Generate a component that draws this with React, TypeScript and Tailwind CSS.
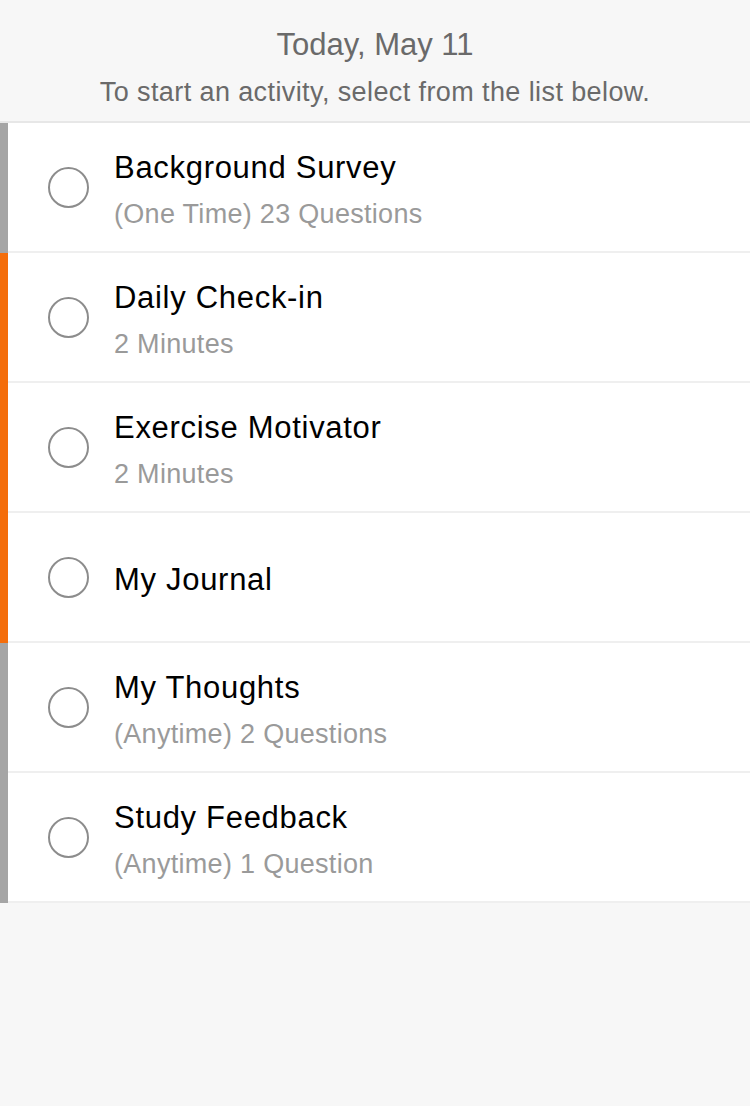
const activities = [
    { title: 'Background Survey', sub: '(One Time) 23 Questions', bar: 'bg-[#a5a5a5]' },
    { title: 'Daily Check-in', sub: '2 Minutes', bar: 'bg-[#f46d0a]' },
    { title: 'Exercise Motivator', sub: '2 Minutes', bar: 'bg-[#f46d0a]' },
    { title: 'My Journal', sub: null, bar: 'bg-[#f46d0a]' },
    { title: 'My Thoughts', sub: '(Anytime) 2 Questions', bar: 'bg-[#a5a5a5]' },
    { title: 'Study Feedback', sub: '(Anytime) 1 Question', bar: 'bg-[#a5a5a5]' },
];

export default function App() {
    return (
        <div className="min-h-[1106px] w-[750px] bg-[#f7f7f7] font-['Liberation_Sans',Arial,sans-serif]">
            <header className="h-[123px] border-b-2 border-[#e7e7e7] flex flex-col items-center text-[#6a6a6a]">
                <h1 className="mt-[27px] text-[31px] leading-[36px]">Today, May 11</h1>
                <p className="mt-[13px] text-[27px] leading-[32px] tracking-[0.4px]">To start an activity, select from the list below.</p>
            </header>

            <ul className="bg-white">
                {activities.map((a) => (
                    <li key={a.title} className="flex h-[130px]">
                        <div className={`w-2 shrink-0 ${a.bar}`} />
                        <div className="flex flex-1 items-center border-b-2 border-[#efefef]">
                            <div className="ml-10 h-[41px] w-[41px] shrink-0 rounded-full border-2 border-[#8c8c8c]" />
                            <div className="ml-[25px] flex flex-col pt-[5px]">
                                <span className="text-[31px] leading-[36px] tracking-[0.7px] text-black">{a.title}</span>
                                {a.sub && (
                                    <span className="mt-[12px] text-[27px] leading-[32px] tracking-[0.3px] text-[#9a9a9a]">{a.sub}</span>
                                )}
                            </div>
                        </div>
                    </li>
                ))}
            </ul>
        </div>
    );
}
